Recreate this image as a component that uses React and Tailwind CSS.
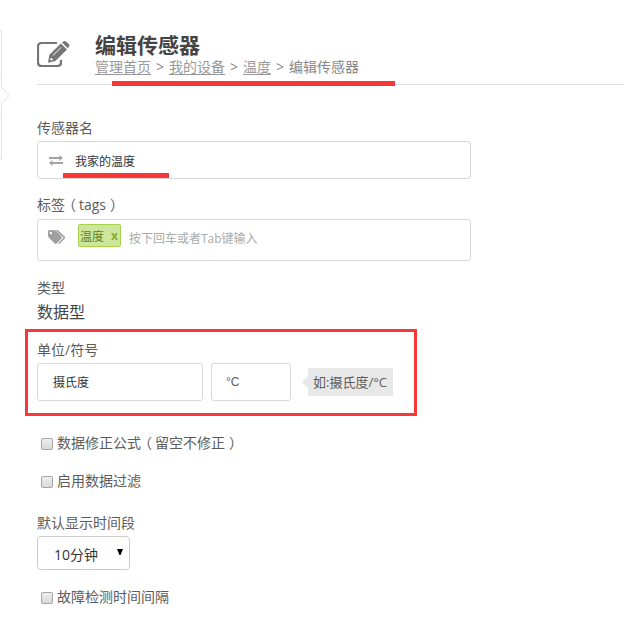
import { useState } from 'react';

const crumbs = ['管理首页', '我的设备', '温度'];

function EditIcon() {
  return (
    <svg width="33" height="28" viewBox="0 0 33 28" className="shrink-0 text-[#757575]">
      <path
        d="M20 2H4.500Q1 2 1 5.500V21.500Q1 25 4.500 25H20.500Q24 25 24 21.500V19"
        fill="none"
        stroke="currentColor"
        strokeWidth="2.200"
      />
      <path d="M23.800 2.400L30 8.600L18.400 19.900L11 21.800L12.400 13.800Z" fill="currentColor" />
      <path d="M25 1.500L26.600 .3Q28.200 -.4 29.600 .9L31.800 3.100Q32.900 4.400 31.900 5.800L30.800 7.300Z" fill="currentColor" />
      <path d="M16 14.400L24.200 6.300" stroke="#fff" strokeWidth="1" fill="none" />
      <path d="M13.800 16.600L16.300 18.800L14.200 19.500L13.200 18.600Z" fill="#fff" />
    </svg>
  );
}

function SwapIcon() {
  return (
    <svg width="14" height="11" viewBox="0 0 14 11" className="shrink-0 text-[#a3a3a3]" fill="currentColor">
      <path d="M0 2H10.500V0L14 3L10.500 6V4H0Z" />
      <path d="M14 7H3.500V5L0 8L3.500 11V9H14Z" />
    </svg>
  );
}

function TagsIcon() {
  return (
    <svg width="18" height="15" viewBox="0 0 18 15" className="shrink-0">
      <path
        fillRule="evenodd"
        fill="#a0a0a0"
        d="M0 1.200Q0 0 1.200 0H6Q7 0 7.800 .8L13.500 6.500Q14.300 7.500 13.500 8.400L8.500 13.500Q7.500 14.300 6.600 13.500L.8 7.600Q0 6.800 0 5.800ZM2.800 1.800A1.200 1.200 0 1 0 2.800 4.200A1.200 1.200 0 1 0 2.800 1.800Z"
      />
      <path d="M8.300 .6H9.200L16 6.900Q16.700 7.600 16 8.300L10.600 13.700" fill="none" stroke="#a0a0a0" strokeWidth="1.500" />
    </svg>
  );
}

function CheckRow({ label, className }) {
  const [checked, setChecked] = useState(false);

  return (
    <label className={`flex items-center h-5 pl-1 gap-1 ${className}`}>
      <input
        type="checkbox"
        checked={checked}
        onChange={(e) => setChecked(e.target.checked)}
        className="appearance-none w-3 h-3 mt-0.5 rounded-[2px] border border-[#a6a6a6] bg-linear-to-b from-[#eeeeee] to-[#d9d9d9] checked:from-[#777] checked:to-[#555]"
      />
      <span>{label}</span>
    </label>
  );
}

function App() {
  const [name, setName] = useState('我家的温度');
  const [unit, setUnit] = useState('摄氏度');
  const [symbol, setSymbol] = useState('°C');

  return (
    <div className="relative flex w-[624px] h-[619px] overflow-hidden bg-white text-sm leading-5 text-[#5c5c5c] font-['Open_Sans','Noto_Sans_CJK_SC',sans-serif]">
      <aside className="w-[37px] shrink-0 pt-[30px]">
        <svg width="11" height="130" viewBox="0 0 11 130" fill="none" stroke="#e3e3e3">
          <path d="M0 .5H1.500V57.500L9.500 65.500L1.500 73.500V129.500H0" />
          <path d="M0 44.500H1.500M0 86.500H1.500" />
        </svg>
      </aside>

      <main className="flex-1">
        <header className="flex h-[85px] pt-[33px] border-b border-[#e1e1e1]">
          <div className="w-[58px] pt-2">
            <EditIcon />
          </div>
          <div>
            <h1 className="text-[21px] leading-6 font-bold text-[#444]">编辑传感器</h1>
            <nav className="flex text-[#888]">
              {crumbs.map((c) => (
                <span key={c} className="flex">
                  <a href="#" className="underline underline-offset-2 text-[#999]">{c}</a>
                  <span className="w-[18px] text-center">&gt;</span>
                </span>
              ))}
              <span>编辑传感器</span>
            </nav>
          </div>
        </header>

        <div className="w-[434px] pt-[33px]">
          <div className="h-[23px]">传感器名</div>
          <div className="flex items-center h-[38px] pl-[11px] border border-[#d9d9d9] rounded-[3px]">
            <SwapIcon />
            <input
              value={name}
              onChange={(e) => setName(e.target.value)}
              className="flex-1 ml-3 pt-[3px] text-xs text-[#333] outline-none"
            />
          </div>

          <div className="flex h-6 mt-4">
            <span>标签</span>
            <span className="-ml-[3px] mr-[3px]">（</span>
            <span>tags</span>
            <span className="ml-1">）</span>
          </div>
          <div className="flex h-[42px] pt-1 pl-[10px] border border-[#d9d9d9] rounded-[3px]">
            <div className="pt-[6px]">
              <TagsIcon />
            </div>
            <div className="flex items-center justify-between w-[43px] h-[23px] ml-3 pl-px pr-[2px] border border-[#a5d24a] rounded-[2px] bg-[#cde69c] text-xs text-[#638421]">
              <span className="pt-[2px]">温度</span>
              <button className="font-bold text-xs text-[#82ad2b]">x</button>
            </div>
            <input
              placeholder="按下回车或者Tab键输入"
              className="flex-1 h-6 mt-[2px] ml-2 text-xs outline-none placeholder:text-[#aaa]"
            />
          </div>

          <div className="mt-[17px]">类型</div>
          <div className="mt-[2px] h-[26px] leading-6 text-base text-[#444]">数据型</div>

          <div className="h-[23px] mt-[14px]">单位/符号</div>
          <div className="flex items-center">
            <input
              value={unit}
              onChange={(e) => setUnit(e.target.value)}
              className="w-[166px] h-[38px] px-[15px] border border-[#d9d9d9] rounded-[3px] text-xs text-[#333] outline-none"
            />
            <input
              value={symbol}
              onChange={(e) => setSymbol(e.target.value)}
              className="w-20 h-[38px] ml-2 px-[14px] border border-[#d9d9d9] rounded-[3px] text-xs font-['Liberation_Sans',sans-serif] outline-none"
            />
            <div className="ml-[11px] border-y-[6px] border-y-transparent border-r-[6px] border-r-[#e8e8e8]" />
            <div className="w-[85px] h-7 leading-7 pl-[5px] bg-[#e8e8e8] text-[13px] whitespace-nowrap">如:摄氏度/°C</div>
          </div>

          <CheckRow
            label={
              <>
                数据修正公式<span className="-ml-[3px] mr-[3px]">（</span>留空不修正<span className="ml-1">）</span>
              </>
            }
            className="mt-8"
          />
          <CheckRow label="启用数据过滤" className="mt-[18px]" />

          <div className="h-[23px] mt-[22px]">默认显示时间段</div>
          <button className="flex items-center w-[93px] h-[34px] pl-4 pt-[2px] border border-[#ccc] rounded-[4px] text-[#333]">
            <span className="w-[63px] pt-px text-left">10分钟</span>
            <svg width="6" height="6" viewBox="0 0 6 6" className="-mt-1">
              <path d="M0 0H6L3.500 6H2.500Z" fill="#000" />
            </svg>
          </button>

          <CheckRow label="故障检测时间间隔" className="mt-[17px]" />
        </div>
      </main>

      {/* highlight marks */}
      <div className="absolute left-[112px] top-[81px] w-[283px] h-[5px] bg-[#fa3737]" />
      <div className="absolute left-[63px] top-[173px] w-[106px] h-[5px] bg-[#fa3737]" />
      <div className="absolute left-[25px] top-[329px] w-[392px] h-[87px] border-3 border-[#fa3737] pointer-events-none" />
    </div>
  );
}

export default App;
